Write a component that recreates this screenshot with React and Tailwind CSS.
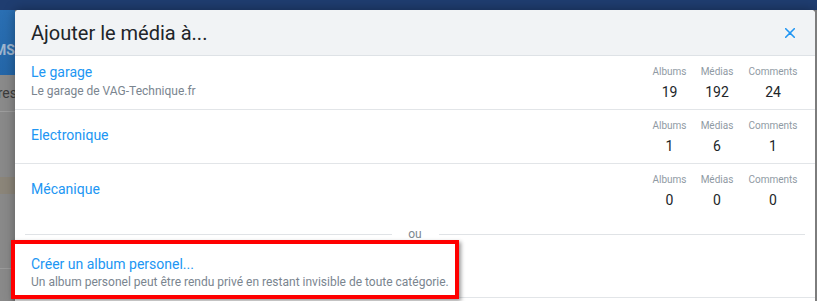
import React from "react";

const categories = [
	{ name: "Le garage", desc: "Le garage de VAG-Technique.fr", albums: 19, medias: 192, comments: 24 },
	{ name: "Electronique", albums: 1, medias: 6, comments: 1 },
	{ name: "Mécanique", albums: 0, medias: 0, comments: 0, last: true },
];

const Stat = ({ label, value, width }) => (
	<div className={`${width} flex flex-col items-center`}>
		<span className="text-[10px] leading-[16px] text-[#8f9aa3]">{label}</span>
		<span className="mt-[2px] text-[14px] leading-[20px] text-[#212529]">{value}</span>
	</div>
);

const CategoryRow = ({ cat }) => (
	<div
		className={`h-[53px] flex items-center justify-between pl-[16px] pr-[16px] ${
			cat.last ? "" : "h-[54px] border-b border-[#e2e5e8]"
		}`}
	>
		{cat.desc ? (
			<div className="flex flex-col">
				<span className="text-[14px] leading-[17px] text-[#2196f3]">{cat.name}</span>
				<span className="text-[12px] leading-[20px] text-[#7a858f]">{cat.desc}</span>
			</div>
		) : (
			<div className="pb-[4px]">
				<span className="text-[14px] leading-[17px] text-[#2196f3]">{cat.name}</span>
			</div>
		)}
		<div className="flex gap-[12px]">
			<Stat label="Albums" value={cat.albums} width="w-[35px]" />
			<Stat label="Médias" value={cat.medias} width="w-[36px]" />
			<Stat label="Comments" value={cat.comments} width="w-[52px]" />
		</div>
	</div>
);

export default function App() {
	return (
		<div className="w-[817px] h-[301px] overflow-hidden bg-[#878787] flex flex-col font-['Roboto',sans-serif]">
			{/* top navy bar of the page behind */}
			<div className="h-[10px] shrink-0 bg-[#1f3d70]"></div>

			<div className="flex flex-1 min-h-0">
				{/* page behind, left side */}
				<div className="w-[15px] shrink-0 flex flex-col overflow-hidden">
					<div className="h-[65px] bg-gradient-to-b from-[#2a6fb3] to-[#2466a8] flex items-center justify-end pt-[16px]">
						<span className="text-[14px] font-bold text-[#9fb6cf] whitespace-nowrap">MS</span>
					</div>
					<div className="h-[37px] bg-[#8a8a8a] flex items-center justify-end border-b border-[#9d9d9d]">
						<span className="text-[14px] text-[#3c3c3c] whitespace-nowrap -mr-[2px]">res</span>
					</div>
					<div className="h-[65px] bg-[#898989]"></div>
					<div className="h-[17px] bg-[#8b8579]"></div>
					<div className="h-[75px] bg-[#898989] border-b border-[#9a9a9a]"></div>
					<div className="flex-1 bg-[#898989]"></div>
				</div>

				{/* dialog */}
				<div className="w-[800px] shrink-0 bg-white rounded-t-[4px] shadow-[0_0_12px_rgba(0,0,0,0.35)] flex flex-col">
					{/* header */}
					<div className="h-[46px] shrink-0 bg-[#f1f3f5] rounded-t-[4px] border-b border-[#dee2e6] flex items-center justify-between pl-[16px] pr-[20px]">
						<h2 className="text-[20px] text-[#212529]">Ajouter le média à...</h2>
						<svg width="10" height="10" viewBox="0 0 10 10" className="text-[#2196f3]">
							<path d="M0.7 0.7 L9.3 9.3 M9.3 0.7 L0.7 9.3" stroke="currentColor" strokeWidth="1.6" strokeLinecap="round" />
						</svg>
					</div>

					{/* categories */}
					{categories.map((cat) => (
						<CategoryRow key={cat.name} cat={cat} />
					))}

					{/* separator */}
					<div className="mt-[10px] h-[14px] flex items-center px-[10px]">
						<div className="flex-1 border-t border-[#e0e3e6]"></div>
						<span className="w-[47px] text-center text-[12px] leading-[14px] text-[#7d8890]">ou</span>
						<div className="flex-1 border-t border-[#e0e3e6]"></div>
					</div>

					{/* personal album */}
					<div className="relative pt-[15px] pb-[6px] pl-[16px] border-b border-[#e2e5e8] flex flex-col">
						<span className="text-[14px] leading-[17px] text-[#2196f3]">Créer un album personel...</span>
						<span className="text-[12px] leading-[18px] text-[#7a858f]">
							Un album personel peut être rendu privé en restant invisible de toute catégorie.
						</span>
						{/* highlight frame */}
						<div className="absolute -left-[4px] -top-[1px] w-[448px] h-[59px] border-[4px] border-[#ff0000] shadow-[2px_2px_4px_rgba(0,0,0,0.4)]"></div>
					</div>
				</div>

				{/* page behind, right side */}
				<div className="flex-1 bg-[#7d7d7d]"></div>
			</div>
		</div>
	);
}
